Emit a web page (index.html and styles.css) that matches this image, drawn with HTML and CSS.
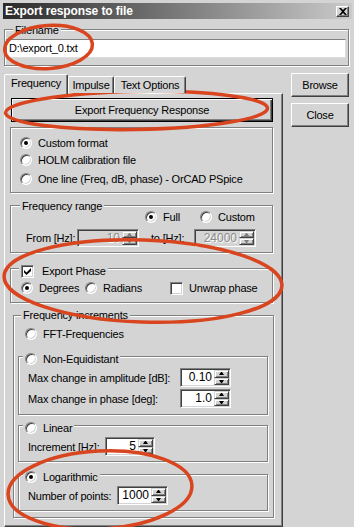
FILE: index.html
```html
<!DOCTYPE html>
<html>
<head>
<meta charset="utf-8">
<title>Export response to file</title>
<link rel="stylesheet" href="styles.css">
</head>
<body>
<div class="window">
  <div class="titlebar">
    <span class="title">Export response to file</span>
    <span class="xbtn"><svg width="8" height="7" viewBox="0 0 8 7"><path d="M0 0h2l2 2 2-2h2L5 3.5 8 7H6L4 5 2 7H0l3-3.5z" fill="#000"/></svg></span>
  </div>

  <div class="group g-file">
    <span class="legend lg-file">Filename</span>
    <div class="textfield">D:\export_0.txt</div>
  </div>

  <div class="main">
    <div class="tabctl">
      <div class="tabs">
        <div class="tab sel t-freq">Frequency</div>
        <div class="tab t-imp">Impulse</div>
        <div class="tab t-txt">Text Options</div>
      </div>
      <div class="panel">
        <div class="btn default wide">Export Frequency Response</div>

        <div class="group g-format">
          <div class="opt"><span class="radio on"></span>Custom format</div>
          <div class="opt"><span class="radio"></span>HOLM calibration file</div>
          <div class="opt opt-gap"><span class="radio"></span>One line (Freq, dB, phase) - OrCAD PSpice</div>
        </div>

        <div class="group g-range">
          <span class="legend lg-range">Frequency range</span>
          <div class="row range-opts">
            <div class="opt-i full"><span class="radio on"></span>Full</div>
            <div class="opt-i"><span class="radio"></span>Custom</div>
          </div>
          <div class="row range-vals">
            <span class="lbl w-from">From [Hz]:</span>
            <div class="spin dis short w62"><div class="field">10</div><div class="arrows"><span class="up"></span><span class="dn"></span></div></div>
            <span class="lbl w-to">to [Hz]:</span>
            <div class="spin dis short w62"><div class="field">24000</div><div class="arrows"><span class="up"></span><span class="dn"></span></div></div>
          </div>
        </div>

        <div class="group g-phase">
          <span class="legend lg-phase"><span class="check on"><svg width="7" height="7" viewBox="0 0 7 7"><path d="M0 2 L2.5 4.5 L7 0 L7 3 L2.5 7 L0 4.5 Z" fill="#000"/></svg></span>Export Phase</span>
          <div class="row">
            <div class="opt-i deg"><span class="radio on"></span>Degrees</div>
            <div class="opt-i rad"><span class="radio"></span>Radians</div>
            <div class="opt-i"><span class="check"></span>Unwrap phase</div>
          </div>
        </div>

        <div class="group g-inc">
          <span class="legend lg-inc">Frequency increments</span>
          <div class="opt-i fft"><span class="radio"></span>FFT-Frequencies</div>

          <div class="group sub g-noneq">
            <span class="legend lg-radio"><span class="radio"></span>Non-Equidistant</span>
            <div class="frow"><span class="lbl w-amp">Max change in amplitude [dB]:</span>
              <div class="spin w51"><div class="field">0.10</div><div class="arrows"><span class="up"></span><span class="dn"></span></div></div></div>
            <div class="frow frow-gap"><span class="lbl w-amp">Max change in phase [deg]:</span>
              <div class="spin w51"><div class="field">1.0</div><div class="arrows"><span class="up"></span><span class="dn"></span></div></div></div>
          </div>

          <div class="group sub g-lin">
            <span class="legend lg-radio"><span class="radio"></span>Linear</span>
            <div class="frow"><span class="lbl w-inc">Increment [Hz]:</span>
              <div class="spin w50"><div class="field">5</div><div class="arrows"><span class="up"></span><span class="dn"></span></div></div></div>
          </div>

          <div class="group sub g-log">
            <span class="legend lg-radio"><span class="radio on"></span>Logarithmic</span>
            <div class="frow"><span class="lbl w-pts">Number of points:</span>
              <div class="spin w51"><div class="field">1000</div><div class="arrows"><span class="up"></span><span class="dn"></span></div></div></div>
          </div>
        </div>
      </div>
    </div>

    <div class="side">
      <div class="btn side-btn">Browse</div>
      <div class="btn side-btn">Close</div>
    </div>
  </div>

  <svg class="marks" width="354" height="527" viewBox="0 0 354 527">
    <g fill="none" stroke="#d8451f" stroke-width="3.5">
      <ellipse cx="48.5" cy="47" rx="44" ry="21.5" transform="rotate(-4 48.5 47)"/>
      <ellipse cx="136.5" cy="110.5" rx="131" ry="19" transform="rotate(-1 136.5 110.5)"/>
      <ellipse cx="143" cy="281" rx="139" ry="41" transform="rotate(2 143 281)"/>
      <ellipse cx="100" cy="490" rx="92" ry="39" transform="rotate(-3 100 490)"/>
    </g>
  </svg>
</div>
</body>
</html>
```

FILE: styles.css
```css
* { box-sizing: border-box; }

body {
  margin: 0;
  background: #d4d4d4;
  font-family: "Liberation Sans", Arial, sans-serif;
  font-size: 11px;
  letter-spacing: -0.2px;
  color: #000;
}

.window {
  position: relative;
  width: 354px;
  height: 527px;
  overflow: hidden;
  background: #d4d4d4;
}

/* title bar */
.titlebar {
  margin: 3px 2px 0 3px;
  height: 16px;
  display: flex;
  align-items: center;
  justify-content: space-between;
  background: linear-gradient(to right, #2a2a2a, #cacaca);
}
.title {
  color: #fff;
  font-weight: bold;
  font-size: 12px;
  letter-spacing: -0.1px;
  padding-left: 2px;
  line-height: 16px;
}
.xbtn {
  width: 13px;
  height: 11px;
  margin-right: 3px;
  background: #d4d4d4;
  border: 1px solid;
  border-color: #fff #404040 #404040 #fff;
  box-shadow: inset -1px -1px #808080;
  display: flex;
  align-items: center;
  justify-content: center;
}
.xbtn svg { display: block; }

/* group boxes */
.group {
  position: relative;
  border: 1px solid #808080;
  box-shadow: inset 1px 1px #fff, 1px 1px #fff;
}
.legend {
  position: absolute;
  top: -7px;
  left: 7px;
  padding: 0 2px;
  height: 14px;
  line-height: 14px;
  background: #d4d4d4;
  display: flex;
  align-items: center;
  white-space: nowrap;
}
.lg-file { left: 8px; }
.lg-range { left: 9px; }
.lg-inc { left: 7px; top: -8px; }
.lg-phase { left: 8px; top: -5px; }
.lg-radio { left: 4px; top: -5px; padding-left: 2px; }

.g-file {
  margin: 10px 0 0 4px;
  width: 345px;
  padding: 9px 2px 7px 1px;
}
.textfield {
  height: 19px;
  background: #fff;
  border: 1px solid;
  border-color: #808080 #dcdcdc #dcdcdc #808080;
  padding-left: 2px;
  line-height: 17px;
}

/* main area */
.main {
  display: flex;
  margin: 7px 0 0 4px;
}
.tabctl { width: 279px; }
.tabs {
  display: flex;
  align-items: flex-end;
  height: 20px;
  position: relative;
  z-index: 1;
}
.tab {
  height: 17px;
  border: 1px solid;
  border-bottom: none;
  border-color: #fff #404040 transparent #fff;
  border-radius: 2px 2px 0 0;
  box-shadow: inset -1px 0 #808080;
  background: #d4d4d4;
  line-height: 16px;
  text-align: center;
}
.tab.sel { height: 20px; margin-bottom: -1px; }
.t-freq { width: 64px; }
.t-imp { width: 46px; }
.t-txt { width: 72px; }

.panel {
  width: 279px;
  height: 434px;
  border: 1px solid;
  border-color: #fff #404040 #404040 #fff;
  box-shadow: inset -1px -1px #808080;
  padding: 4px 0 0 5px;
}

/* buttons */
.btn {
  background: #d4d4d4;
  text-align: center;
}
.default {
  margin-left: 1px;
  width: 262px;
  height: 24px;
  border: 1px solid #000;
  box-shadow: inset 1px 1px #fff, inset -1px -1px #404040, inset -2px -2px #808080;
  line-height: 22px;
}
.side {
  margin-left: 8px;
  display: flex;
  flex-direction: column;
  gap: 6px;
}
.side-btn {
  width: 58px;
  height: 24px;
  border: 1px solid;
  border-color: #fff #404040 #404040 #fff;
  box-shadow: inset -1px -1px #808080;
  line-height: 22px;
}

/* radios & checks */
.radio {
  position: relative;
  flex: none;
  width: 12px;
  height: 12px;
  border-radius: 50%;
  border: 1px solid;
  border-color: #808080 #fff #fff #808080;
  box-shadow: inset 1px 1px #404040, inset -1px -1px #d4d4d4;
  background: #fff;
  margin-right: 6px;
}
.radio.on::after {
  content: "";
  position: absolute;
  left: 3px;
  top: 3px;
  width: 4px;
  height: 4px;
  border-radius: 50%;
  background: #000;
}
.check {
  flex: none;
  width: 13px;
  height: 13px;
  border: 1px solid;
  border-color: #808080 #fff #fff #808080;
  box-shadow: inset 1px 1px #404040, inset -1px -1px #d4d4d4;
  background: #fff;
  margin-right: 6px;
  padding: 2px;
}
.check svg { display: block; }
.lg-phase .check { margin-right: 8px; }

.opt {
  display: flex;
  align-items: center;
  height: 17px;
}
.opt-gap { margin-top: 2px; }
.opt-i {
  display: flex;
  align-items: center;
  height: 14px;
}
.row {
  display: flex;
  align-items: center;
}

.g-format {
  margin-top: 5px;
  width: 263px;
  padding: 6px 0 5px 9px;
}

.g-range {
  margin-top: 12px;
  width: 263px;
  padding: 4px 0 5px 0;
}
.range-opts { margin-left: 134px; height: 14px; }
.full { width: 55px; }
.range-vals { margin-top: 5px; padding-left: 15px; }
.w-from { width: 51px; }
.w-to { width: 43px; margin-left: 12px; }

.g-phase {
  margin-top: 15px;
  width: 263px;
  padding: 12px 0 7px 10px;
}
.deg { width: 64px; }
.rad { width: 85px; }

.g-inc {
  margin: 12px 0 0 3px;
  width: 261px;
  padding: 11px 0 6px 4px;
}
.fft { padding-left: 7px; }
.sub { width: 250px; padding: 11px 0 5px 9px; }
.g-noneq { margin-top: 15px; padding-bottom: 6px; }
.g-lin { margin-top: 10px; }
.g-log { margin-top: 12px; }

.frow {
  display: flex;
  align-items: center;
  height: 19px;
}
.frow-gap { margin-top: 2px; }
.lbl { flex: none; white-space: nowrap; }
.w-amp { width: 152px; }
.w-inc { width: 77px; }
.w-pts { width: 89px; }

/* spinners */
.spin {
  display: flex;
  flex: none;
  height: 19px;
  border: 1px solid;
  border-color: #808080 #fff #fff #808080;
  padding: 1px;
  box-shadow: inset 1px 1px #404040, inset -1px -1px #d4d4d4;
  background: #fff;
}
.spin.short { height: 18px; }
.w62 { width: 62px; }
.w51 { width: 51px; }
.w50 { width: 50px; }
.field {
  flex: 1;
  text-align: right;
  padding-right: 2px;
  line-height: 15px;
  font-size: 12px;
  letter-spacing: 0;
}
.short .field { line-height: 14px; }
.arrows {
  width: 15px;
  display: flex;
  flex-direction: column;
}
.arrows span {
  flex: 1;
  background: #d4d4d4;
  border: 1px solid;
  border-color: #d4d4d4 #404040 #404040 #d4d4d4;
  box-shadow: inset 1px 1px #fff, inset -1px -1px #808080;
  display: flex;
  align-items: center;
  justify-content: center;
}
.arrows span::after {
  content: "";
  width: 1px;
  height: 0;
  border-left: 2px solid transparent;
  border-right: 2px solid transparent;
}
.arrows .up::after { border-bottom: 3px solid #000; }
.arrows .dn::after { border-top: 3px solid #000; }

.spin.dis { background: #d4d4d4; }
.spin.dis .field { color: #8a8a8a; text-shadow: 1px 1px #fff; }
.spin.dis .up::after { border-bottom-color: #808080; }
.spin.dis .dn::after { border-top-color: #808080; }

/* annotation overlay */
.marks {
  position: absolute;
  left: 0;
  top: 0;
  pointer-events: none;
}
```
